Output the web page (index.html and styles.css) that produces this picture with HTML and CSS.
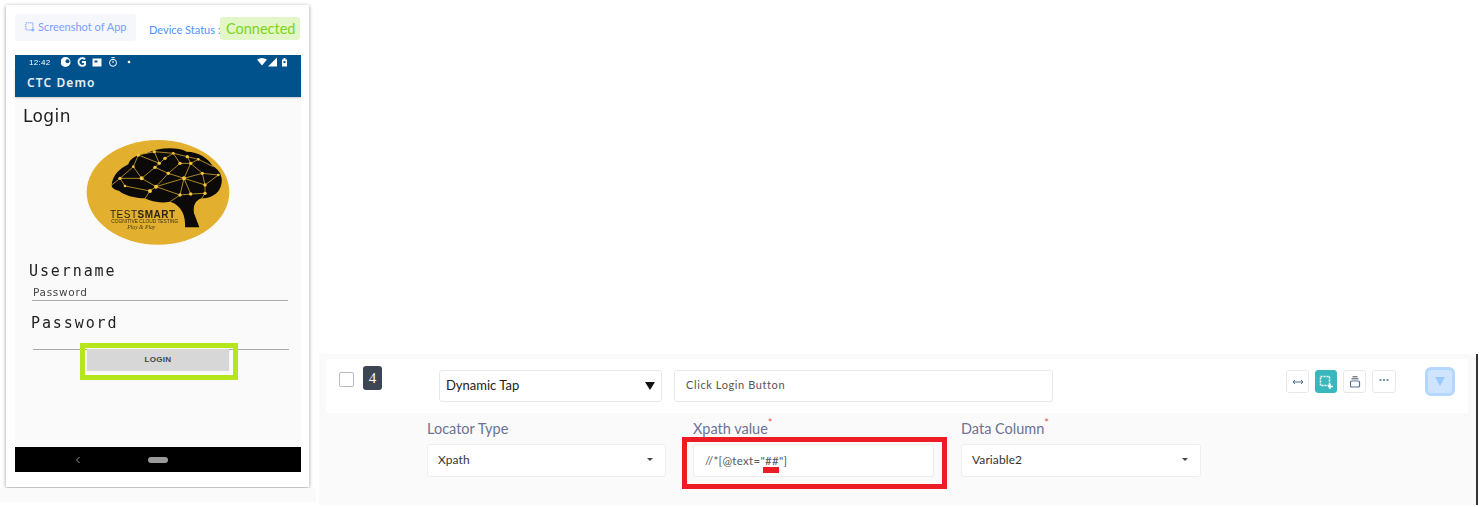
FILE: index.html
```html
<!DOCTYPE html>
<html lang="en">
<head>
  <meta charset="UTF-8">
  <meta name="viewport" content="width=device-width, initial-scale=1.0">
  <title>Step 4 - Dynamic Tap</title>
  <link rel="stylesheet" href="styles.css">
</head>
<body>

  <aside class="side">
    <div class="device-card">
      <div class="device-top">
        <div class="shot-tab">
          <svg class="shot-icon" viewBox="0 0 12 12"><path d="M1 1h8.500v8.500H1z" fill="none" stroke="#6f9cff" stroke-width="1.200" stroke-dasharray="1.600 1"/><path d="M9.500 7.500v4M7.500 9.500h4" stroke="#6f9cff" stroke-width="1"/></svg>
          <span>Screenshot of App</span>
        </div>
        <span class="status-label">Device Status :</span>
        <span class="status-badge">Connected</span>
      </div>

      <div class="phone">
        <div class="status-bar">
          <span class="clock">12:42</span>
          <svg class="status-left" viewBox="0 0 90 10">
            <circle cx="4.500" cy="5" r="5" fill="#fff"/><circle cx="6.500" cy="4.200" r="2" fill="#00528c"/>
            <path d="M24 2.300a3.800 3.800 0 1 0 0 5.400V5h-3" fill="none" stroke="#fff" stroke-width="2"/>
            <path d="M31.500 1.500h9v8h-9z" fill="#fff"/><path d="M33.500 3.500h3v2h-3z" fill="#00528c"/>
            <circle cx="52" cy="5.800" r="3.500" fill="none" stroke="#fff" stroke-width="1"/><path d="M52 3.800v2.200M50.300 .7h3.400" stroke="#fff" stroke-width="1"/>
            <circle cx="68" cy="5" r="1.300" fill="#fff"/>
          </svg>
          <svg class="status-right" viewBox="0 0 34 10">
            <path d="M3 2.500q5-3 10 0L8 8.500z" fill="#fff"/>
            <path d="M23 .5v9h-9z" fill="#fff"/>
            <path d="M28 2.500h1.500V1h2v1.500H33v7h-5z" fill="#fff"/>
            <path d="M29.500 4h2v2h-2z" fill="#00528c"/>
          </svg>
        </div>
        <div class="app-bar">CTC Demo</div>

        <div class="phone-body">
          <h1 class="login-title">Login</h1>

          <svg class="logo" viewBox="0 0 540 360">
            <ellipse cx="264" cy="187" rx="214" ry="157" fill="#e2b02e"/>
            <path d="M125 165C128 135 150 115 175 103C180 85 205 72 230 70C265 52 320 50 350 65C385 65 415 85 428 108C450 120 462 145 452 170C445 192 420 205 395 205C378 210 368 225 372 250L388 292H345C348 260 335 225 300 215C275 220 245 216 225 205C195 205 160 195 148 183C135 180 125 175 125 165Z" fill="#0b0a08"/>
            <g fill="none" stroke="#c99c2b" stroke-width="2.500">
              <path d="M205 75L253 65L310 70L352 80L385 88L430 110M205 75L190 110L150 145L125 165M190 110L215 145L150 145L165 168L240 183L258 170L215 145M253 65L268 100L285 85L310 70L330 100L362 100L385 88M268 100L255 112L215 145M255 112L295 130L330 100M295 130L342 145L362 100L397 130L445 135M342 145L397 130L405 165L445 135M342 145L405 165L405 190L362 192L342 145M342 145L330 195L362 192M258 170L342 145M258 170L330 195L300 215M240 183L225 205M258 170L295 130M205 75L268 100M352 80L362 100M405 190L395 205"/>
            </g>
            <g fill="#f2c63e">
              <circle cx="205" cy="75" r="5"/><circle cx="253" cy="65" r="5"/><circle cx="310" cy="70" r="4"/><circle cx="352" cy="80" r="5"/><circle cx="385" cy="88" r="4"/>
              <circle cx="268" cy="100" r="5"/><circle cx="285" cy="85" r="5"/><circle cx="330" cy="100" r="5"/><circle cx="362" cy="100" r="5"/><circle cx="255" cy="112" r="5"/>
              <circle cx="190" cy="110" r="4"/><circle cx="295" cy="130" r="5"/><circle cx="397" cy="130" r="5"/><circle cx="150" cy="145" r="5"/><circle cx="215" cy="145" r="6"/>
              <circle cx="342" cy="145" r="6"/><circle cx="405" cy="165" r="5"/><circle cx="258" cy="170" r="6"/><circle cx="165" cy="168" r="4"/><circle cx="240" cy="183" r="6"/>
              <circle cx="330" cy="195" r="5"/><circle cx="362" cy="192" r="5"/><circle cx="405" cy="190" r="5"/><circle cx="445" cy="135" r="4"/>
            </g>
            <text class="logo-name" x="120" y="263">TEST<tspan class="logo-bold">SMART</tspan></text>
            <text class="logo-sub" x="124" y="279">COGNITIVE CLOUD TESTING</text>
            <text class="logo-tag" x="172" y="296">Play &amp; Play</text>
          </svg>

          <div class="mono-label user-label">Username</div>
          <div class="hint">Password</div>
          <div class="underline first-line"></div>
          <div class="mono-label pass-label">Password</div>
          <div class="underline second-line"></div>
          <div class="login-wrap">
            <div class="login-btn">LOGIN</div>
            <div class="mark-green"></div>
          </div>
        </div>

        <div class="nav-bar">
          <svg class="nav-back" viewBox="0 0 6 8"><path d="M4.500 1L1.500 4l3 3" fill="none" stroke="#999" stroke-width="1"/></svg>
          <span class="nav-home"></span>
        </div>
      </div>
    </div>
    <div class="side-strip"></div>
  </aside>

  <main class="main">
    <section class="step-panel">
      <div class="step-row">
        <span class="check"></span>
        <span class="step-no">4</span>
        <div class="action-select">
          <span>Dynamic Tap</span>
          <span class="big-caret"></span>
        </div>
        <div class="desc-input">Click Login Button</div>
        <div class="tools">
          <button class="tool">
            <svg viewBox="0 0 12 12"><path d="M1 6h10M3 4L1 6l2 2M9 4l2 2-2 2" fill="none" stroke="#4a6a94" stroke-width="1"/></svg>
          </button>
          <button class="tool tool-on">
            <svg viewBox="0 0 14 14"><path d="M1.500 1.500h9v9h-9z" fill="none" stroke="#fff" stroke-width="1.500" stroke-dasharray="2 1"/><path d="M11 9v5M9 11.500h5" stroke="#fff" stroke-width="1.400"/></svg>
          </button>
          <button class="tool">
            <svg viewBox="0 0 12 12"><path d="M3.500 .8h5M2.500 2.800h7" stroke="#4a4f5c" stroke-width="1"/><rect x="1.500" y="5" width="9" height="6" rx="1" fill="none" stroke="#5a7299" stroke-width="1.200"/></svg>
          </button>
          <button class="tool tool-more">
            <svg viewBox="0 0 12 12"><path d="M1.500 6h2M5 6h2M8.500 6h2" stroke="#4a6a94" stroke-width="1.400"/></svg>
          </button>
        </div>
        <button class="expand"><span class="expand-caret"></span></button>
      </div>

      <div class="fields">
        <div class="field">
          <label class="field-label">Locator Type</label>
          <div class="field-box">
            <span>Xpath</span>
            <span class="small-caret"></span>
          </div>
        </div>
        <div class="field">
          <label class="field-label">Xpath value<sup class="req">*</sup></label>
          <div class="field-box">
            <span class="xpath-text">//*[@text="##"]</span>
            <span class="mark-dash"></span>
          </div>
          <div class="mark-red"></div>
        </div>
        <div class="field">
          <label class="field-label">Data Column<sup class="req">*</sup></label>
          <div class="field-box">
            <span>Variable2</span>
            <span class="small-caret"></span>
          </div>
        </div>
      </div>
    </section>
  </main>

</body>
</html>
```

FILE: styles.css
```css
* {
  box-sizing: border-box;
}

html, body {
  height: 100%;
}

body {
  margin: 0;
  display: flex;
  height: 507px;
  overflow: hidden;
  background-color: white;
  font-family: Lato, "Noto Sans", sans-serif;
  color: #333;
}

/* left column */
.side {
  width: 316px;
  flex-shrink: 0;
  display: flex;
  flex-direction: column;
}

.device-card {
  width: 303px;
  height: 482px;
  margin: 5px 0 0 6px;
  padding: 9px 8px 0 9px;
  background-color: white;
  box-shadow: 0 1px 4px rgba(0, 0, 0, 0.4);
}

.side-strip {
  height: 14px;
  margin-top: 1px;
  background-color: #fafafa;
}

.device-top {
  display: flex;
  align-items: flex-start;
  height: 41px;
}

.shot-tab {
  width: 121px;
  height: 27px;
  display: flex;
  align-items: center;
  gap: 3px;
  padding: 0 0 2px 10px;
  background-color: #f6f7fb;
  border-radius: 3px;
  font-size: 11px;
  color: #7a9fff;
}

.shot-icon {
  width: 10px;
  height: 10px;
}

.status-label {
  margin: 9px 0 0 13px;
  width: 71px;
  font-size: 11px;
  white-space: nowrap;
  color: #4d94ff;
}

.status-badge {
  width: 80px;
  height: 23px;
  margin-top: 3px;
  padding-left: 6px;
  line-height: 23px;
  background-color: #e2f6c7;
  border-radius: 3px;
  font-size: 14.500px;
  color: #7ed321;
}

/* phone screenshot */
.phone {
  width: 286px;
  height: 417px;
  display: flex;
  flex-direction: column;
  background-color: #fafafa;
}

.status-bar {
  height: 14px;
  display: flex;
  align-items: center;
  padding: 0 13px 0 14px;
  background-color: #00528c;
  filter: blur(0.3px);
}

.clock {
  width: 32px;
  font-family: "Liberation Sans", sans-serif;
  font-size: 8px;
  letter-spacing: 0.3px;
  color: white;
}

.status-left {
  width: 90px;
  height: 10px;
}

.status-right {
  width: 34px;
  height: 10px;
  margin-left: auto;
}

.app-bar {
  height: 28px;
  padding: 1px 0 0 12px;
  line-height: 26px;
  background-color: #00528c;
  box-shadow: 0 1px 2px rgba(0, 0, 0, 0.2);
  font-family: "Noto Sans", sans-serif;
  font-size: 12px;
  font-weight: 600;
  letter-spacing: 1.100px;
  color: #e8eef4;
}

.phone-body {
  flex: 1;
  display: flex;
  flex-direction: column;
  position: relative;
}

.login-title {
  margin: 8px 0 0 8px;
  height: 22px;
  line-height: 23px;
  font-family: "DejaVu Sans", sans-serif;
  font-size: 17px;
  font-weight: normal;
  letter-spacing: 0.4px;
  color: #1c1c1c;
  filter: blur(0.3px);
}

.logo {
  width: 180px;
  height: 120px;
  margin: 3px 0 0 55px;
  flex-shrink: 0;
  filter: blur(0.4px);
}

.logo-name {
  font-family: "Liberation Sans", sans-serif;
  font-size: 30px;
  letter-spacing: 1.500px;
  fill: #2a2418;
}

.logo-bold {
  font-weight: bold;
}

.logo-sub {
  font-family: "Liberation Sans", sans-serif;
  font-size: 14.500px;
  fill: #3a3016;
}

.logo-tag {
  font-family: "Liberation Serif", serif;
  font-style: italic;
  font-size: 17px;
  fill: #4b3c14;
}

.mono-label {
  height: 18px;
  line-height: 18px;
  font-family: "DejaVu Sans Mono", monospace;
  font-size: 15px;
  letter-spacing: 1.900px;
  color: #222;
  filter: blur(0.3px);
}

.user-label {
  margin: 12px 0 0 14px;
}

.hint {
  margin: 6px 0 0 18px;
  height: 13px;
  line-height: 13px;
  font-family: "DejaVu Sans", sans-serif;
  font-size: 10.500px;
  letter-spacing: 0.700px;
  color: #444;
  filter: blur(0.3px);
}

.underline {
  height: 1px;
  background-color: #aaa;
}

.first-line {
  margin: 1px 13px 0 17px;
}

.pass-label {
  margin: 13px 0 0 16px;
}

.second-line {
  margin: 17px 12px 0 18px;
}

.login-wrap {
  position: relative;
  width: 142px;
  height: 21px;
  margin: -1px 0 0 72px;
}

.login-btn {
  height: 21px;
  line-height: 21px;
  text-align: center;
  background-color: #d6d7d6;
  box-shadow: 0 1px 1px rgba(0, 0, 0, 0.12);
  font-family: "Liberation Sans", sans-serif;
  font-size: 8px;
  font-weight: bold;
  letter-spacing: 0.3px;
  color: #444;
}

.mark-green {
  position: absolute;
  left: -7px;
  right: -9px;
  top: -6px;
  bottom: -10px;
  border: 5px solid #b5e61d;
}

.nav-bar {
  height: 25px;
  position: relative;
  display: flex;
  align-items: center;
  background-color: black;
}

.nav-back {
  width: 6px;
  height: 8px;
  margin-left: 60px;
}

.nav-home {
  width: 20px;
  height: 6px;
  margin-left: 67px;
  border-radius: 3px;
  background-color: #9a9a9a;
}

/* right side */
.main {
  flex: 1;
  display: flex;
  flex-direction: column;
  justify-content: flex-end;
  padding: 0 1px 2px 3px;
}

.step-panel {
  height: 151px;
  padding-top: 5px;
  background-color: #fafafa;
  border-right: 2px solid #333;
}

.step-row {
  height: 54px;
  margin: 0 8px 0 7px;
  display: flex;
  align-items: flex-start;
  background-color: white;
}

.check {
  width: 15px;
  height: 15px;
  margin: 13px 0 0 13px;
  border: 1px solid #bbb;
  border-radius: 2px;
  background-color: white;
}

.step-no {
  width: 19px;
  height: 24px;
  margin: 7px 0 0 9px;
  text-align: center;
  line-height: 24px;
  border-radius: 3px;
  background-color: #3d4654;
  font-family: "Liberation Serif", serif;
  font-size: 15px;
  color: white;
}

.action-select {
  width: 223px;
  height: 32px;
  margin: 11px 0 0 57px;
  display: flex;
  align-items: center;
  justify-content: space-between;
  padding: 0 6px 3px 6px;
  border: 1px solid #e8e8e8;
  border-radius: 3px;
  font-size: 13px;
  color: #222;
}

.big-caret {
  margin-top: 3px;
  border-left: 5px solid transparent;
  border-right: 5px solid transparent;
  border-top: 8px solid #111;
}

.desc-input {
  width: 379px;
  height: 32px;
  margin: 11px 0 0 12px;
  padding-left: 11px;
  line-height: 27px;
  border: 1px solid #e8e8e8;
  border-radius: 3px;
  font-size: 11px;
  letter-spacing: 0.6px;
  color: #555;
}

.tools {
  display: flex;
  gap: 6px;
  margin: 11px 0 0 233px;
}

.tool {
  width: 23px;
  height: 23px;
  display: flex;
  align-items: center;
  justify-content: center;
  padding: 0;
  background-color: white;
  border: 1px solid #e8e8e8;
  border-radius: 3px;
}

.tool svg {
  width: 12px;
  height: 12px;
}

.tool-more {
  width: 24px;
}

.tool-more svg {
  margin-top: -4px;
}

.tool-on {
  width: 22px;
  background-color: #38b8bd;
  border-color: #38b8bd;
}

.tool-on svg {
  width: 14px;
  height: 14px;
}

.expand {
  width: 30px;
  height: 29px;
  margin: 8px 0 0 29px;
  display: flex;
  align-items: center;
  justify-content: center;
  padding: 0;
  background-color: #cfe5ff;
  border: 3px solid #b3d7ff;
  border-radius: 6px;
}

.expand-caret {
  border-left: 5.500px solid transparent;
  border-right: 5.500px solid transparent;
  border-top: 9px solid #99c9ff;
}

.fields {
  display: grid;
  grid-template-columns: 239px 241px 240px;
  gap: 27px;
  margin: 5px 0 0 108px;
}

.field {
  position: relative;
}

.field-label {
  display: block;
  height: 26px;
  line-height: 22px;
  font-size: 14.500px;
  color: #6b7394;
}

.req {
  position: relative;
  top: -1px;
  font-size: 11px;
  line-height: 0;
  color: #ef5350;
}

.field-box {
  position: relative;
  height: 33px;
  display: flex;
  align-items: center;
  justify-content: space-between;
  padding: 0 12px 2px 10px;
  background-color: white;
  border: 1px solid #eee;
  border-radius: 3px;
  font-size: 12px;
  letter-spacing: 0.1px;
  color: #333;
}

.small-caret {
  border-left: 3.500px solid transparent;
  border-right: 3.500px solid transparent;
  border-top: 3.500px solid #444;
}

.xpath-text {
  margin: 2px 0 0 1px;
  font-size: 11.500px;
  letter-spacing: 0.3px;
  color: #555;
}

.mark-dash {
  position: absolute;
  left: 69px;
  top: 22px;
  width: 16px;
  height: 6px;
  background-color: #ed1c24;
}

.mark-red {
  position: absolute;
  left: -11px;
  top: 19px;
  width: 265px;
  height: 52px;
  border: 5px solid #ed1c24;
}
```
